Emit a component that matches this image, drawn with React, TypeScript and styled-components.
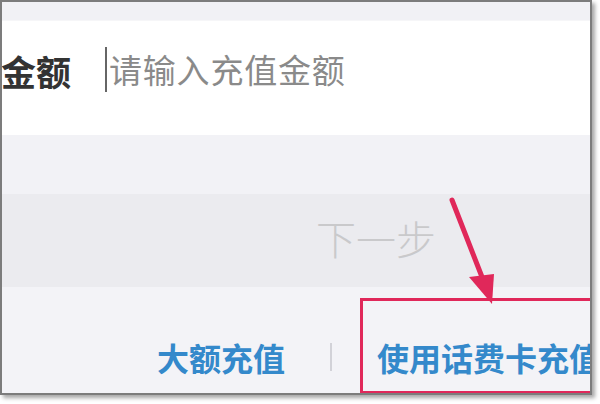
import React from "react";
import styled, { createGlobalStyle } from "styled-components";

const Global = createGlobalStyle`
  html, body { margin: 0; padding: 0; background: #ffffff; }
  body { width: 600px; height: 404px; overflow: hidden; font-family: "Noto Sans CJK SC", "Noto Sans", sans-serif; }
`;

const Frame = styled.div`
  position: relative;
  width: 588px;
  height: 391px;
  border: 2px solid #7c7c7c;
  box-shadow: 3px 3px 4px rgba(0, 0, 0, 0.35);
  display: flex;
  flex-direction: column;
  overflow: hidden;
  background: #f3f3f7;
`;

const TopStrip = styled.div`
  height: 18px;
  background: #f1f1f5;
  border-bottom: 1px solid #f6f6f8;
`;

const InputRow = styled.div`
  height: 82px;
  padding-top: 32px;
  background: #ffffff;
  display: flex;
  align-items: flex-start;
`;

const Label = styled.span`
  font-size: 35px;
  line-height: 1;
  font-weight: 700;
  color: #333333;
  margin-left: -1px;
`;

const Cursor = styled.span`
  width: 2px;
  height: 45px;
  margin-top: -6px;
  margin-left: 34px;
  background: #666666;
`;

const Placeholder = styled.span`
  font-size: 33px;
  line-height: 1;
  color: #8a8a8a;
  margin-left: 2px;
  letter-spacing: 0.8px;
`;

const Gap = styled.div`
  height: 59px;
  background: #f2f2f6;
`;

const NextButton = styled.div`
  height: 93px;
  background: #ebebef;
  display: flex;
  align-items: center;
  padding-left: 314px;
  padding-bottom: 6px;
  box-sizing: border-box;
`;

const NextText = styled.span`
  font-size: 40px;
  line-height: 1;
  font-weight: 300;
  color: #c9c9cb;
`;

const Links = styled.div`
  flex: 1;
  display: flex;
  align-items: flex-start;
  padding-top: 54px;
  padding-left: 155px;
  background: #f3f3f7;
  overflow: hidden;
`;

const LinkText = styled.span`
  font-size: 32px;
  line-height: 1;
  font-weight: 700;
  color: #3489cb;
  white-space: nowrap;
`;

const Divider = styled.span`
  flex: none;
  width: 2px;
  height: 28px;
  margin: 2px 45px 0 45px;
  background: #d2d2d8;
`;

const Highlight = styled.div`
  position: absolute;
  left: 358px;
  top: 296px;
  width: 260px;
  height: 90px;
  border: 3px solid #e0285a;
  pointer-events: none;
`;

const Arrow = styled.svg`
  position: absolute;
  left: 0;
  top: 0;
  pointer-events: none;
`;

export default function App() {
  return (
    <>
      <Global />
      <Frame>
        <TopStrip />
        <InputRow>
          <Label>金额</Label>
          <Cursor />
          <Placeholder>请输入充值金额</Placeholder>
        </InputRow>
        <Gap />
        <NextButton>
          <NextText>下一步</NextText>
        </NextButton>
        <Links>
          <LinkText>大额充值</LinkText>
          <Divider />
          <LinkText>使用话费卡充值</LinkText>
        </Links>
        <Highlight />
        <Arrow width="600" height="404" viewBox="0 0 600 404">
          <line x1="450" y1="198" x2="480" y2="275" stroke="#e0285a" strokeWidth="5" strokeLinecap="round" />
          <polygon points="467,275 492,272 490,302" fill="#e0285a" />
        </Arrow>
      </Frame>
    </>
  );
}
